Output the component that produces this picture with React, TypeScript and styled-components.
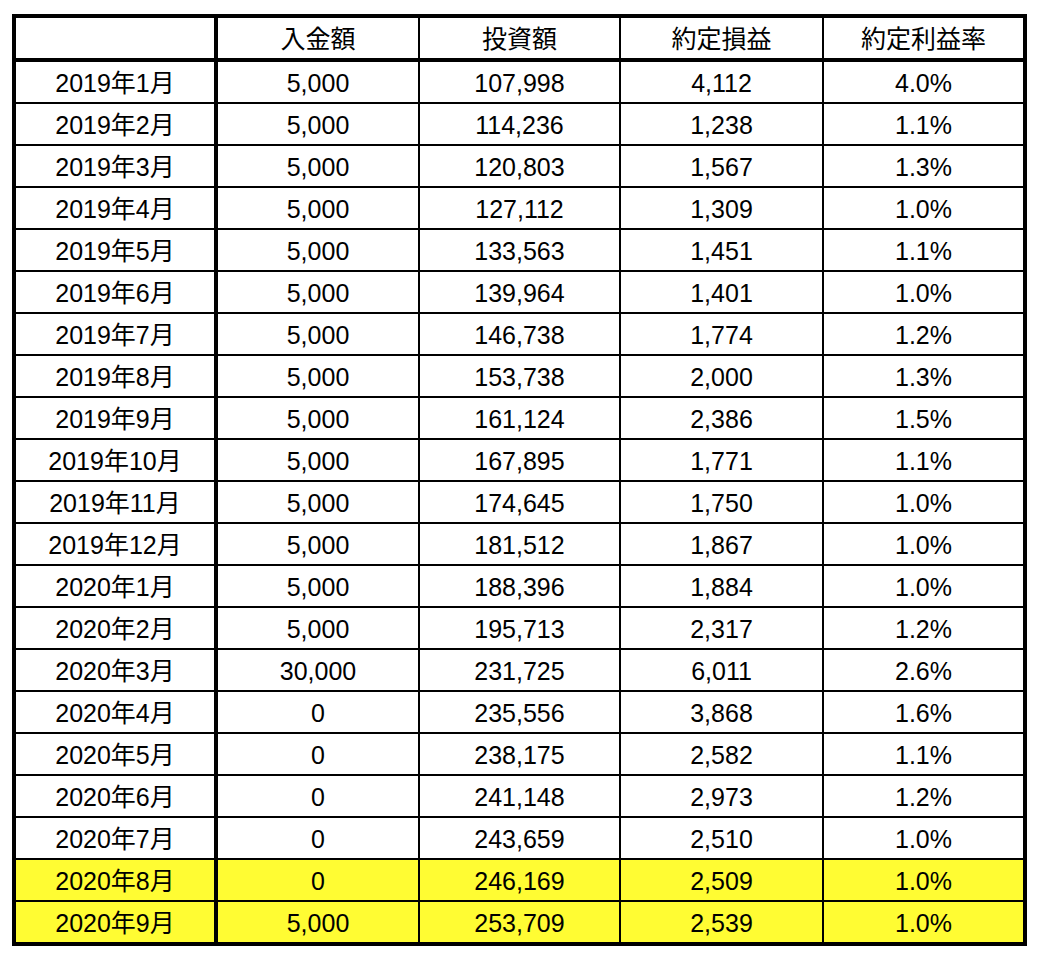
import React from 'react';
import styled, { createGlobalStyle } from 'styled-components';

const GlobalStyle = createGlobalStyle`
  html, body {
    margin: 0;
    padding: 0;
    background: #ffffff;
  }
  body {
    font-family: "Liberation Sans", Arial, "Noto Sans CJK JP", sans-serif;
    color: #000;
  }
`;

const Page = styled.div`
  padding: 14px 0 0 12px;
`;

const Sheet = styled.div`
  box-sizing: border-box;
  width: 1015px;
  border: 4px solid #000;
  display: grid;
  grid-template-columns: 202px 202px 201px 203px 199px;
`;

const Cell = styled.div<{ $head?: boolean; $first?: boolean; $last?: boolean; $lastRow?: boolean; $hl?: boolean }>`
  box-sizing: border-box;
  height: ${(p) => (p.$head ? 44 : p.$lastRow ? 40 : 42)}px;
  padding-top: 2px;
  display: flex;
  align-items: center;
  justify-content: center;
  font-size: 25px;
  line-height: 1;
  background: ${(p) => (p.$hl ? '#fffc33' : '#ffffff')};
  border-right: ${(p) => (p.$last ? 'none' : p.$first ? '4px solid #000' : '2px solid #000')};
  border-bottom: ${(p) => (p.$lastRow ? 'none' : p.$head ? '4px solid #000' : '2px solid #000')};
  white-space: nowrap;
`;

const headers = ['', '入金額', '投資額', '約定損益', '約定利益率'];

const rows: [string, string, string, string, string][] = [
  ['2019年1月', '5,000', '107,998', '4,112', '4.0%'],
  ['2019年2月', '5,000', '114,236', '1,238', '1.1%'],
  ['2019年3月', '5,000', '120,803', '1,567', '1.3%'],
  ['2019年4月', '5,000', '127,112', '1,309', '1.0%'],
  ['2019年5月', '5,000', '133,563', '1,451', '1.1%'],
  ['2019年6月', '5,000', '139,964', '1,401', '1.0%'],
  ['2019年7月', '5,000', '146,738', '1,774', '1.2%'],
  ['2019年8月', '5,000', '153,738', '2,000', '1.3%'],
  ['2019年9月', '5,000', '161,124', '2,386', '1.5%'],
  ['2019年10月', '5,000', '167,895', '1,771', '1.1%'],
  ['2019年11月', '5,000', '174,645', '1,750', '1.0%'],
  ['2019年12月', '5,000', '181,512', '1,867', '1.0%'],
  ['2020年1月', '5,000', '188,396', '1,884', '1.0%'],
  ['2020年2月', '5,000', '195,713', '2,317', '1.2%'],
  ['2020年3月', '30,000', '231,725', '6,011', '2.6%'],
  ['2020年4月', '0', '235,556', '3,868', '1.6%'],
  ['2020年5月', '0', '238,175', '2,582', '1.1%'],
  ['2020年6月', '0', '241,148', '2,973', '1.2%'],
  ['2020年7月', '0', '243,659', '2,510', '1.0%'],
  ['2020年8月', '0', '246,169', '2,509', '1.0%'],
  ['2020年9月', '5,000', '253,709', '2,539', '1.0%'],
];

const App = () => {
  return (
    <Page>
      <GlobalStyle />
      <Sheet>
        {headers.map((h, i) => (
          <Cell key={`h${i}`} $head $first={i === 0} $last={i === 4}>
            {h}
          </Cell>
        ))}
        {rows.map((r, ri) =>
          r.map((v, ci) => (
            <Cell
              key={`${ri}-${ci}`}
              $first={ci === 0}
              $last={ci === 4}
              $lastRow={ri === rows.length - 1}
              $hl={ri >= rows.length - 2}
            >
              {v}
            </Cell>
          ))
        )}
      </Sheet>
    </Page>
  );
};

export default App;
